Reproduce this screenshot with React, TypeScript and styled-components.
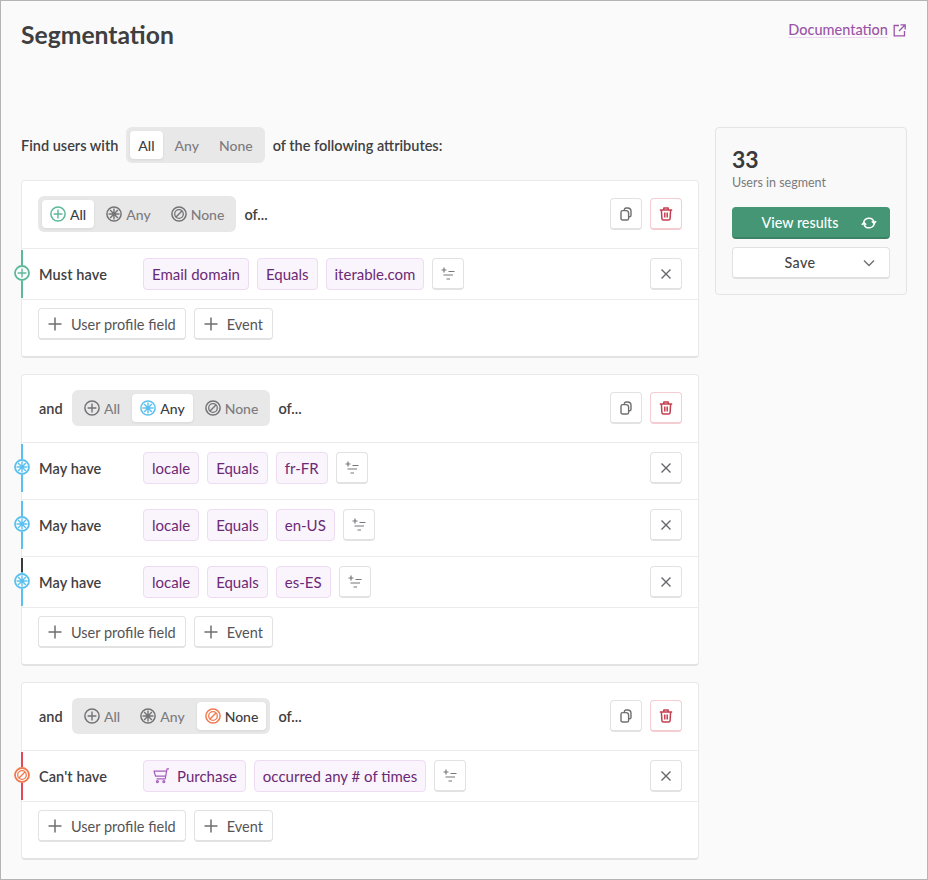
import React from 'react';
import styled, { createGlobalStyle } from 'styled-components';

const GlobalStyle = createGlobalStyle`
  html, body {
    margin: 0;
    padding: 0;
  }
  body {
    background: #fafafa;
    color: #3d3d3f;
    font-family: 'Lato', 'Liberation Sans', sans-serif;
    -webkit-font-smoothing: antialiased;
  }
  * {
    box-sizing: border-box;
  }
`;

type Mode = 'all' | 'any' | 'none';

const modeColors: Record<Mode, string> = {
  all: '#5cb899',
  any: '#5cc0ee',
  none: '#f07a50',
};

const railColors: Record<Mode, string> = {
  all: '#5cb899',
  any: '#5cc0ee',
  none: '#e2485a',
};

const Page = styled.div`
  width: 928px;
  height: 880px;
  border: 1px solid #b4b4b4;
  padding: 0 20px;
  overflow: hidden;
`;

const Header = styled.header`
  display: flex;
  justify-content: space-between;
  height: 126px;
  padding-top: 18px;
`;

const Title = styled.h1`
  margin: 1px 0 0;
  font-size: 24.7px;
  line-height: 29px;
  font-weight: 700;
  color: #3f3f41;
`;

const DocLink = styled.a`
  display: flex;
  align-items: flex-start;
  gap: 5px;
  height: 20px;
  margin-right: 1px;
  color: #9a55a8;
  font-size: 14.5px;
  line-height: 21px;
  font-weight: 500;

  span {
    border-bottom: 1px solid #ecd9f0;
    height: 19px;
  }
  svg {
    flex: none;
    margin-top: 5px;
  }
`;

const Columns = styled.div`
  display: flex;
  gap: 16px;
  align-items: flex-start;
`;

const Main = styled.main`
  width: 678px;
  display: flex;
  flex-direction: column;
  gap: 16px;
`;

const FindRow = styled.div`
  display: flex;
  align-items: center;
  gap: 8px;
  height: 36px;
  margin-bottom: 1px;
  font-size: 14.5px;
  font-weight: 600;
  color: #404042;
`;

const Segmented = styled.div`
  display: inline-flex;
  gap: 4px;
  height: 36px;
  padding: 4px;
  border-radius: 6px;
  background: #e9e8e9;
`;

const Tab = styled.div<{ $active?: boolean }>`
  display: flex;
  align-items: center;
  gap: 4px;
  height: 28px;
  padding: 0 8px;
  border-radius: 4px;
  font-size: 14px;
  font-weight: 500;
  color: ${(p) => (p.$active ? '#3d3d3f' : '#7d7c7e')};
  background: ${(p) => (p.$active ? '#fff' : 'transparent')};
  box-shadow: ${(p) => (p.$active ? '0 1px 3px rgba(0,0,0,0.08)' : 'none')};

  svg {
    flex: none;
  }
`;

const Card = styled.section`
  background: #fff;
  border: 1px solid #e9e9e9;
  border-bottom: 2px solid #e3e3e3;
  border-radius: 4px;
`;

const CardHead = styled.div`
  display: flex;
  align-items: center;
  justify-content: space-between;
  padding: 15px 16px 16px 16px;
  border-bottom: 1px solid #ececec;
`;

const HeadLeft = styled.div`
  display: flex;
  align-items: center;
  gap: 8px;
  font-size: 14.5px;
  font-weight: 600;
  color: #404042;
`;

const AndLabel = styled.span`
  width: 25px;
  margin-left: 1px;
`;

const HeadActions = styled.div`
  display: flex;
  gap: 8px;
`;

const IconButton = styled.button<{ $danger?: boolean }>`
  display: flex;
  flex: none;
  align-items: center;
  justify-content: center;
  width: 32px;
  height: 32px;
  padding: 0;
  background: #fff;
  border: 1px solid ${(p) => (p.$danger ? '#f3cdd2' : '#e2e2e2')};
  border-bottom-width: 2px;
  border-radius: 4px;
  color: ${(p) => (p.$danger ? '#c4404f' : '#6f6e70')};
`;

const Row = styled.div<{ $last?: boolean }>`
  position: relative;
  display: flex;
  align-items: flex-start;
  height: ${(p) => (p.$last ? 51 : 57)}px;
  padding: 9px 16px 0 17px;
  border-bottom: 1px solid #ececec;
`;

const Rail = styled.div<{ $mode: Mode; $dark?: boolean }>`
  position: absolute;
  left: -1px;
  top: 1px;
  width: 2px;
  height: 48px;
  background: ${(p) =>
    p.$dark
      ? `linear-gradient(#3a3a3c 0 14px, ${railColors[p.$mode]} 14px)`
      : railColors[p.$mode]};
`;

const RailIcon = styled.div`
  position: absolute;
  left: -8px;
  top: 16px;
  width: 16px;
  height: 16px;
  display: flex;
  background: #fff;
  border-radius: 50%;
`;

const RowLabel = styled.div`
  width: 104px;
  flex: none;
  font-size: 14.5px;
  line-height: 33px;
  font-weight: 600;
  letter-spacing: 0.1px;
  color: #404042;
`;

const Chips = styled.div`
  display: flex;
  flex: 1;
  align-items: center;
  gap: 8px;
`;

const Chip = styled.div`
  display: flex;
  align-items: center;
  gap: 8px;
  height: 32px;
  padding: 0 8px 1px;
  background: #faf4fc;
  border: 1px solid #eddcf2;
  border-radius: 4px;
  font-size: 15px;
  color: #6b2a75;

  svg {
    flex: none;
    margin-left: 1px;
  }
`;

const AddRow = styled.div`
  display: flex;
  gap: 8px;
  padding: 8px 16px 16px;
`;

const AddButton = styled.button`
  display: flex;
  align-items: center;
  gap: 9px;
  height: 32px;
  padding: 1px 9px 0;
  background: #fff;
  border: 1px solid #e2e2e2;
  border-bottom-width: 2px;
  border-radius: 4px;
  font-family: inherit;
  font-size: 14.5px;
  color: #555456;
`;

const Side = styled.aside`
  width: 192px;
  height: 168px;
  padding: 16px;
  background: #f9f9f9;
  border: 1px solid #e4e4e4;
  border-radius: 4px;
`;

const Count = styled.div`
  font-size: 23px;
  line-height: 30px;
  font-weight: 700;
  color: #3a3a3c;
`;

const CountLabel = styled.div`
  margin-top: 1px;
  font-size: 12.5px;
  line-height: 16px;
  color: #7b7a7c;
`;

const WideButton = styled.button<{ $primary?: boolean }>`
  position: relative;
  display: flex;
  align-items: center;
  justify-content: center;
  width: 158px;
  height: 32px;
  margin-top: ${(p) => (p.$primary ? 16 : 8)}px;
  padding: 0 22px 0 0;
  border-radius: 4px;
  border: 1px solid ${(p) => (p.$primary ? '#459675' : '#e2e2e2')};
  border-bottom: 2px solid ${(p) => (p.$primary ? '#3b8265' : '#e0e0e0')};
  background: ${(p) => (p.$primary ? '#459675' : '#fff')};
  color: ${(p) => (p.$primary ? '#fff' : '#444345')};
  font-family: inherit;
  font-size: 14.3px;
  font-weight: 500;
  letter-spacing: ${(p) => (p.$primary ? 0 : 0.4)}px;

  svg {
    position: absolute;
    right: 12px;
    top: 7px;
  }
`;

const ModeIcon = ({ mode, color, bg, heavy }: { mode: Mode; color: string; bg?: string; heavy?: boolean }) => {
  return (
    <svg width="16" height="16" viewBox="0 0 16 16" fill="none" stroke={color} strokeWidth={heavy ? 1.8 : 1.5}>
      <circle cx="8" cy="8" r={heavy ? 7 : 7.1} fill={bg || 'none'} />
      {mode === 'all' && <path d="M8 3.6v8.8M3.6 8h8.8" strokeWidth="1.4" />}
      {mode === 'any' && (
        <path d="M8 2.5v11M2.5 8h11M4.1 4.1l7.8 7.8M11.9 4.1l-7.8 7.8" strokeWidth="1.4" />
      )}
      {mode === 'none' && (
        <>
          <circle cx="8" cy="8" r="4.3" strokeWidth="1.3" />
          <path d="M11.2 4.8l-6.4 6.4" strokeWidth="1.4" />
        </>
      )}
    </svg>
  );
};

const PlusIcon = () => (
  <svg width="14" height="14" viewBox="0 0 14 14" fill="none" stroke="#6f6e70" strokeWidth="1.5">
    <path d="M7 0.5v13M0.5 7h13" />
  </svg>
);

const FilterIcon = () => (
  <svg width="14" height="14" viewBox="0 0 14 14" fill="none" stroke="#77767a" strokeWidth="1.2">
    <path d="M3 0.5v5M0.5 3h5M7.5 4.5h6M2.5 8h9.5M5.5 12h3.5" />
  </svg>
);

const CloseIcon = () => (
  <svg width="12" height="12" viewBox="0 0 12 12" fill="none" stroke="#66656a" strokeWidth="1.4">
    <path d="M1.5 1.5l9 9M10.5 1.5l-9 9" />
  </svg>
);

const CopyIcon = () => (
  <svg width="14" height="14" viewBox="0 0 14 14" fill="none" stroke="currentColor" strokeWidth="1.4" strokeLinejoin="round">
    <path d="M5.4 3.4V2.6c0-1 .7-1.6 1.6-1.6h1.6c2 0 3.4 1.4 3.4 3.4v3.8c0 1-.6 1.6-1.6 1.6H9.6" />
    <path d="M3.6 3.6h3.4c1.6 0 2.6 1 2.6 2.6v5.2c0 .9-.7 1.6-1.6 1.6H3.6c-.9 0-1.6-.7-1.6-1.6V5.2c0-.9.7-1.6 1.6-1.6z" />
  </svg>
);

const TrashIcon = () => (
  <svg width="14" height="14" viewBox="0 0 14 14" fill="none" stroke="currentColor" strokeWidth="1.5" strokeLinejoin="round">
    <path d="M.8 3h12.4M4.8 3V1h4.4v2M2.4 3l.5 8.6c.1.8.6 1.4 1.4 1.4h5.4c.8 0 1.3-.6 1.4-1.4l.5-8.6M5.8 5.6v4.8M8.2 5.6v4.8" />
  </svg>
);

const ExternalIcon = () => (
  <svg width="13" height="13" viewBox="0 0 13 13" fill="none" stroke="currentColor" strokeWidth="1.3">
    <path d="M6 1.5H1.2v10.3h10.3V7M7.5 .8h4.7v4.7M12 1 6 7" />
  </svg>
);

const RefreshIcon = () => (
  <svg width="16" height="16" viewBox="0 0 16 16" fill="none" stroke="#fff" strokeWidth="1.5">
    <path d="M2.6 8A5.4 5.4 0 0 1 13 6.6V8M13.4 8A5.4 5.4 0 0 1 3 9.4V8" />
    <path d="M10.8 6.2 13 8.4l2.2-2.2M.8 9.8 3 7.6l2.2 2.2" />
  </svg>
);

const ChevronIcon = () => (
  <svg width="16" height="16" viewBox="0 0 16 16" fill="none" stroke="#6f6e70" strokeWidth="1.4">
    <path d="M3 5.5l5 5 5-5" />
  </svg>
);

const CartIcon = () => (
  <svg width="16" height="16" viewBox="0 0 16 16" fill="none" stroke="#a65cc0" strokeWidth="1.2" strokeLinejoin="round">
    <path d="M16 .8h-2l-1.8 10H3.6M.6 3.2h12.6M1 3.2l1.6 5h10" />
    <circle cx="4.4" cy="13.6" r="1" />
    <circle cx="10.8" cy="13.6" r="1" />
  </svg>
);

const ModeTabs = ({ active }: { active: Mode }) => (
  <Segmented>
    {(['all', 'any', 'none'] as Mode[]).map((m) => (
      <Tab key={m} $active={m === active}>
        <ModeIcon mode={m} color={m === active ? modeColors[m] : '#737275'} />
        {m === 'all' ? 'All' : m === 'any' ? 'Any' : 'None'}
      </Tab>
    ))}
  </Segmented>
);

type Condition = {
  label: string;
  chips: string[];
  cart?: boolean;
  dark?: boolean;
};

type Group = {
  mode: Mode;
  and: boolean;
  conditions: Condition[];
};

const groups: Group[] = [
  {
    mode: 'all',
    and: false,
    conditions: [{ label: 'Must have', chips: ['Email domain', 'Equals', 'iterable.com'] }],
  },
  {
    mode: 'any',
    and: true,
    conditions: [
      { label: 'May have', chips: ['locale', 'Equals', 'fr-FR'] },
      { label: 'May have', chips: ['locale', 'Equals', 'en-US'] },
      { label: 'May have', chips: ['locale', 'Equals', 'es-ES'], dark: true },
    ],
  },
  {
    mode: 'none',
    and: true,
    conditions: [
      { label: "Can't have", chips: ['Purchase', 'occurred any # of times'], cart: true },
    ],
  },
];

const App = () => {
  return (
    <Page>
      <GlobalStyle />
      <Header>
        <Title>Segmentation</Title>
        <DocLink>
          <span>Documentation</span>
          <ExternalIcon />
        </DocLink>
      </Header>
      <Columns>
        <Main>
          <FindRow>
            Find users with
            <Segmented>
              <Tab $active>All</Tab>
              <Tab>Any</Tab>
              <Tab>None</Tab>
            </Segmented>
            of the following attributes:
          </FindRow>
          {groups.map((group, i) => (
            <Card key={i}>
              <CardHead>
                <HeadLeft>
                  {group.and && <AndLabel>and</AndLabel>}
                  <ModeTabs active={group.mode} />
                  of...
                </HeadLeft>
                <HeadActions>
                  <IconButton>
                    <CopyIcon />
                  </IconButton>
                  <IconButton $danger>
                    <TrashIcon />
                  </IconButton>
                </HeadActions>
              </CardHead>
              {group.conditions.map((c, j) => (
                <Row key={j} $last={j === group.conditions.length - 1}>
                  <Rail $mode={group.mode} $dark={c.dark} />
                  <RailIcon>
                    <ModeIcon mode={group.mode} color={modeColors[group.mode]} bg="#fff" heavy />
                  </RailIcon>
                  <RowLabel>{c.label}</RowLabel>
                  <Chips>
                    {c.chips.map((chip, k) => (
                      <Chip key={k}>
                        {c.cart && k === 0 && <CartIcon />}
                        {chip}
                      </Chip>
                    ))}
                    <IconButton>
                      <FilterIcon />
                    </IconButton>
                  </Chips>
                  <IconButton>
                    <CloseIcon />
                  </IconButton>
                </Row>
              ))}
              <AddRow>
                <AddButton>
                  <PlusIcon />
                  User profile field
                </AddButton>
                <AddButton>
                  <PlusIcon />
                  Event
                </AddButton>
              </AddRow>
            </Card>
          ))}
        </Main>
        <Side>
          <Count>33</Count>
          <CountLabel>Users in segment</CountLabel>
          <WideButton $primary>
            View results
            <RefreshIcon />
          </WideButton>
          <WideButton>
            Save
            <ChevronIcon />
          </WideButton>
        </Side>
      </Columns>
    </Page>
  );
};

export default App;
